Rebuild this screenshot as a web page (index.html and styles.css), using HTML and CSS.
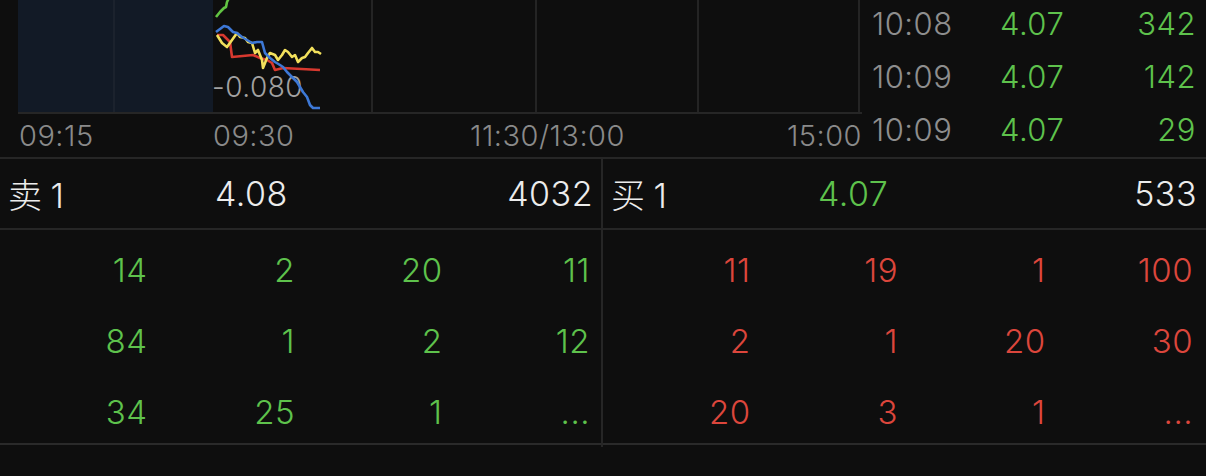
FILE: index.html
```html
<!DOCTYPE html>
<html lang="zh-CN">
<head>
    <meta charset="UTF-8">
    <title>分时 · 五档</title>
    <link rel="stylesheet" href="styles.css">
</head>
<body>
    <section class="top">
        <div class="chart">
            <div class="plot">
                <div class="col pre"></div>
                <div class="col pre"></div>
                <div class="col"></div>
                <div class="col"></div>
                <div class="col"></div>
                <div class="col"></div>
                <span class="plot-label">-0.080</span>
                <svg class="lines" viewBox="0 0 842 112" width="842" height="112">
                    <polyline class="ln-green" points="198,17 202,12 204,10 206,8 208,7 209,2 210,0 211,-2"/>
                    <polyline class="ln-red" points="199,35 205,35 212,42 214,57 235,55 242,58 249,60 254,63 257,70 265,68 302,70"/>
                    <polyline class="ln-yellow" points="199,35 204,43 209,47 214,40 219,33 222,37 227,38 230,42 234,43 237,53 240,50 244,60 245,68 249,58 252,53 257,55 260,60 264,55 267,50 270,52 274,57 277,55 280,62 284,58 287,57 290,53 294,48 297,52 300,52 303,54"/>
                    <polyline class="ln-blue" points="198,32 206,26 210,27 215,32 219,33 224,37 229,40 234,43 239,42 244,42 247,53 252,58 257,62 262,65 265,67 269,72 272,75 275,78 279,82 282,87 285,92 289,97 292,105 295,108 302,108"/>
                </svg>
            </div>
            <div class="axis">
                <span class="t1">09:15</span>
                <span class="t2">09:30</span>
                <span class="t3">11:30/13:00</span>
                <span class="t4">15:00</span>
            </div>
        </div>
        <div class="ticks">
            <div class="tick"><span class="time">10:08</span><span class="up">4.07</span><span class="vol up">342</span></div>
            <div class="tick"><span class="time">10:09</span><span class="up">4.07</span><span class="vol up">142</span></div>
            <div class="tick"><span class="time">10:09</span><span class="up">4.07</span><span class="vol up">29</span></div>
        </div>
    </section>

    <section class="book">
        <div class="side sell">
            <div class="head">
                <span class="lbl">卖<b>1</b></span>
                <span class="price">4.08</span>
                <span class="qty">4032</span>
            </div>
            <div class="queue up">
                <span>14</span><span>2</span><span>20</span><span>11</span>
                <span>84</span><span>1</span><span>2</span><span>12</span>
                <span>34</span><span>25</span><span>1</span><span>...</span>
            </div>
        </div>
        <div class="side buy">
            <div class="head">
                <span class="lbl">买<b>1</b></span>
                <span class="price up">4.07</span>
                <span class="qty">533</span>
            </div>
            <div class="queue down">
                <span>11</span><span>19</span><span>1</span><span>100</span>
                <span>2</span><span>1</span><span>20</span><span>30</span>
                <span>20</span><span>3</span><span>1</span><span>...</span>
            </div>
        </div>
    </section>
</body>
</html>
```

FILE: styles.css
```css
* {
    box-sizing: border-box;
}

body {
    margin: 0;
    width: 1206px;
    height: 476px;
    overflow: hidden;
    background-color: #0e0e0e;
    color: #ececec;
    font-family: Inter, "Noto Sans CJK SC", sans-serif;
    font-weight: 300;
    letter-spacing: 0.03em;
}

.up {
    color: #5ec24c;
}

.down {
    color: #dc463c;
}

/* chart + tick list */
.top {
    display: flex;
    height: 159px;
    border-bottom: 2px solid #262626;
}

.chart {
    margin-left: 18px;
    width: 844px;
}

.plot {
    position: relative;
    display: grid;
    grid-template-columns: 97px 98px 160px 164px 162px 161px;
    height: 114px;
    border-bottom: 2px solid #262626;
}

.col {
    border-right: 2px solid #242424;
}

.col.pre {
    background-color: #121a26;
    border-right-color: #1b222d;
}

.col.pre + .col.pre {
    border-right: none;
}

.plot-label {
    position: absolute;
    left: 194px;
    top: 72px;
    font-size: 28px;
    line-height: 30px;
    color: #a2a2a2;
}

.lines {
    position: absolute;
    left: 0;
    top: 0;
    overflow: visible;
}

.lines polyline {
    fill: none;
    stroke-width: 2.6;
    stroke-linejoin: round;
}

.ln-green { stroke: #62c443; }
.ln-red { stroke: #d8392f; }
.ln-yellow { stroke: #f2e05c; }
.ln-blue { stroke: #3d78d6; }

.axis {
    display: flex;
    align-items: center;
    height: 43px;
    padding-left: 1px;
    font-size: 29px;
    color: #8a8a8a;
}

.axis .t1 { width: 194px; }
.axis .t2 { width: 257px; }
.axis .t4 { margin-left: auto; margin-right: 0; }

.ticks {
    flex: 1;
    padding: 0 10px 0 10px;
    margin-top: -3px;
}

.tick {
    display: grid;
    grid-template-columns: 128px 1fr auto;
    align-items: center;
    height: 53px;
    font-size: 31px;
}

.tick .time {
    color: #8e8e8e;
}

/* order book */
.book {
    display: grid;
    grid-template-columns: 601px 605px;
    height: 286px;
    border-bottom: 2px solid #2a2a2a;
}

.buy {
    border-left: 2px solid #262626;
}

.head {
    display: grid;
    grid-template-columns: 207px 1fr auto;
    align-items: center;
    height: 71px;
    padding: 0 8px 0 8px;
    font-size: 34px;
    border-bottom: 2px solid #262626;
}

.head .lbl b {
    font-weight: 300;
    margin-left: 8px;
}

.buy .head {
    padding-right: 9px;
}

.queue {
    display: grid;
    grid-template-columns: repeat(4, 1fr);
    grid-auto-rows: 71px;
    align-items: center;
    padding: 4px 11px 0 0;
    font-size: 33px;
    text-align: right;
}

.buy .queue {
    padding-right: 13px;
}
```
